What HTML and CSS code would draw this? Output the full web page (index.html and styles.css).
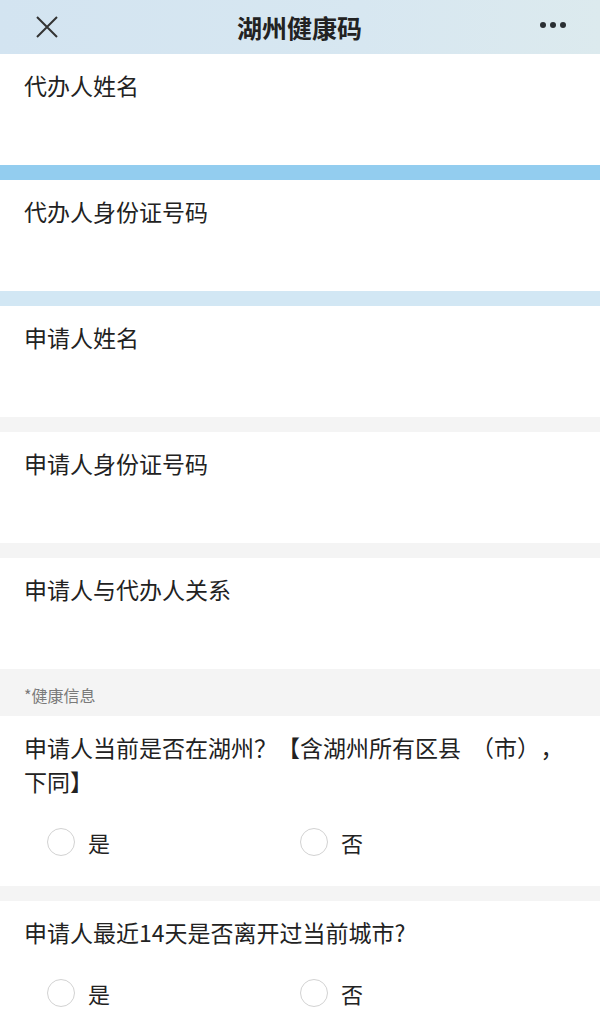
FILE: index.html
```html
<!DOCTYPE html>
<html lang="zh-CN">
<head>
  <meta charset="UTF-8">
  <meta name="viewport" content="width=device-width, initial-scale=1.0">
  <title>湖州健康码</title>
  <link rel="stylesheet" href="styles.css">
</head>
<body>

<div class="topbar">
  <span class="close">
    <svg width="24" height="24" viewBox="0 0 24 24"><path d="M2 2 L22 22 M22 2 L2 22" stroke="#333" stroke-width="2" fill="none"/></svg>
  </span>
  <span class="title">湖州健康码</span>
  <span class="more"><i></i><i></i><i></i></span>
</div>

<div class="field">
  <div class="label">代办人姓名</div>
</div>
<div class="gap gap-blue"></div>

<div class="field">
  <div class="label">代办人身份证号码</div>
</div>
<div class="gap gap-lightblue"></div>

<div class="field">
  <div class="label">申请人姓名</div>
</div>
<div class="gap"></div>

<div class="field">
  <div class="label">申请人身份证号码</div>
</div>
<div class="gap"></div>

<div class="field">
  <div class="label">申请人与代办人关系</div>
</div>

<div class="group-title">*健康信息</div>

<div class="question">
  <div class="label"><span class="nowrap">申请人当前是否在湖州？【含湖州所有区县<span class="paren">（市）</span>，</span><br>下同】</div>
  <div class="options">
    <label class="option"><span class="radio"></span>是</label>
    <label class="option"><span class="radio"></span>否</label>
  </div>
</div>
<div class="gap"></div>

<div class="question">
  <div class="label">申请人最近14天是否离开过当前城市?</div>
  <div class="options">
    <label class="option"><span class="radio"></span>是</label>
    <label class="option"><span class="radio"></span>否</label>
  </div>
</div>

</body>
</html>
```

FILE: styles.css
```css
body {
  font-family: "Noto Sans CJK SC", "Noto Sans", sans-serif;
  background-color: #fff;
  color: #222;
  margin: 0;
  padding: 0;
}
.topbar {
  height: 54px;
  background: linear-gradient(90deg, #d3e4f1 0%, #d7e7f1 60%, #dceaee 100%);
  display: flex;
  align-items: center;
  justify-content: space-between;
  padding: 0 34px 0 35px;
}
.close {
  width: 24px;
  height: 24px;
  display: flex;
}
.title {
  font-size: 25px;
  font-weight: bold;
  color: #222;
}
.more {
  display: flex;
  gap: 4px;
  width: 26px;
  margin-top: -4px;
}
.more i {
  width: 6px;
  height: 6px;
  border-radius: 50%;
  background-color: #2a2f33;
}
.field {
  height: 111px;
  padding: 14px 24px 0;
  box-sizing: border-box;
}
.label {
  font-size: 23px;
  line-height: 34px;
}
.nowrap {
  white-space: nowrap;
}
.paren {
  margin: 0 12px 0 10px;
}
.gap {
  height: 15px;
  background-color: #f4f4f4;
}
.gap-blue {
  background-color: #93cdef;
}
.gap-lightblue {
  background-color: #d2e7f4;
}
.group-title {
  height: 47px;
  line-height: 41px;
  padding: 6px 24px 0;
  box-sizing: border-box;
  background-color: #f4f4f4;
  font-size: 16px;
  color: #7a7a7a;
}
.question {
  padding: 14px 24px 30px;
}
.options {
  display: flex;
  margin-top: 30px;
  padding-left: 23px;
}
.option {
  width: 253px;
  display: flex;
  align-items: center;
  font-size: 22px;
  line-height: 28px;
}
.radio {
  width: 26px;
  height: 26px;
  border: 1.5px solid #d2d2d2;
  border-radius: 50%;
  margin-right: 13px;
}
```
